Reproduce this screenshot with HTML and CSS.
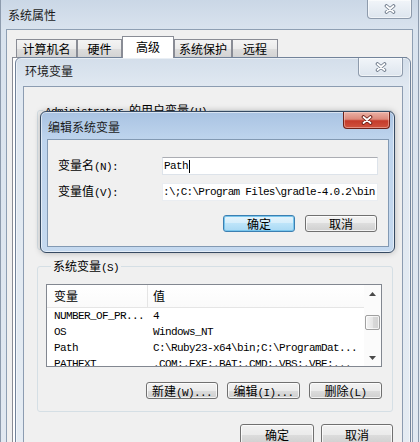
FILE: index.html
```html
<!DOCTYPE html>
<html lang="zh-CN">
<head>
<meta charset="utf-8">
<title>系统属性</title>
<link rel="stylesheet" href="styles.css">
</head>
<body>
<section class="win outer">
  <header class="tbar">
    <span class="ttl">系统属性</span>
    <span class="cls cls-in cls-outer">
      <svg width="12" height="10" viewBox="0 0 12 10"><path d="M2.5 2L9.5 8M9.5 2L2.5 8" stroke="#6f7b8b" stroke-width="3.6" stroke-linecap="round"/><path d="M2.5 2L9.5 8M9.5 2L2.5 8" stroke="#fff" stroke-width="1.8" stroke-linecap="round"/></svg>
    </span>
  </header>
  <div class="oclient">
    <div class="tabs">
      <span class="tab w61">计算机名</span>
      <span class="tab w45">硬件</span>
      <span class="tab sel w52">高级</span>
      <span class="tab w58">系统保护</span>
      <span class="tab w46">远程</span>
    </div>
    <div class="tabpanel"></div>
  </div>
</section>

<section class="win env">
  <header class="tbar env-tbar">
    <span class="ttl">环境变量</span>
    <span class="cls cls-in cls-env">
      <svg width="12" height="10" viewBox="0 0 12 10"><path d="M2.5 2L9.5 8M9.5 2L2.5 8" stroke="#6f7b8b" stroke-width="3.6" stroke-linecap="round"/><path d="M2.5 2L9.5 8M9.5 2L2.5 8" stroke="#fff" stroke-width="1.8" stroke-linecap="round"/></svg>
    </span>
  </header>
  <div class="eclient">
    <div class="group ugroup">
      <span class="glabel"><span class="m">Administrator </span>的用户变量<span class="m">(U)</span></span>
    </div>
    <div class="group sgroup">
      <span class="glabel">系统变量<span class="m">(S)</span></span>
      <div class="lv">
        <div class="lv-main">
          <div class="lv-head">
            <span class="h1">变量</span>
            <span class="h2">值</span>
          </div>
          <div class="lv-rows">
            <div class="row"><span class="c1 m">NUMBER_OF_PR...</span><span class="c2 m">4</span></div>
            <div class="row"><span class="c1 m">OS</span><span class="c2 m">Windows_NT</span></div>
            <div class="row"><span class="c1 m">Path</span><span class="c2 m">C:\Ruby23-x64\bin;C:\ProgramDat...</span></div>
            <div class="row"><span class="c1 m">PATHEXT</span><span class="c2 m">.COM;.EXE;.BAT;.CMD;.VBS;.VBE;...</span></div>
          </div>
        </div>
        <div class="sb">
          <span class="sb-btn"><svg width="7" height="4" viewBox="0 0 7 4"><path d="M0 4L3.5 0L7 4Z" fill="#4a4a4a"/></svg></span>
          <span class="sb-track"><span class="thumb"></span></span>
          <span class="sb-btn"><svg width="7" height="4" viewBox="0 0 7 4"><path d="M0 0L3.5 4L7 0Z" fill="#4a4a4a"/></svg></span>
        </div>
      </div>
      <div class="brow">
        <button class="btn w72">新建<span class="m">(W)...</span></button>
        <button class="btn w73">编辑<span class="m">(I)...</span></button>
        <button class="btn w73">删除<span class="m">(L)</span></button>
      </div>
    </div>
    <div class="brow bottom">
      <button class="btn w74 tall">确定</button>
      <button class="btn w72 tall">取消</button>
    </div>
  </div>
</section>

<section class="win edit">
  <header class="tbar edit-tbar">
    <span class="ttl">编辑系统变量</span>
    <span class="cls cls-red">
      <svg width="12" height="10" viewBox="0 0 12 10"><path d="M2.5 2L9.5 8M9.5 2L2.5 8" stroke="#6b1d14" stroke-width="3.6" stroke-linecap="round"/><path d="M2.5 2L9.5 8M9.5 2L2.5 8" stroke="#fff" stroke-width="1.8" stroke-linecap="round"/></svg>
    </span>
  </header>
  <div class="dclient">
    <div class="form">
      <span class="lbl">变量名<span class="m">(N):</span></span>
      <span class="inp m">Path<span class="caret"></span></span>
      <span class="lbl">变量值<span class="m">(V):</span></span>
      <span class="inp inp2 m">:\;C:\Program Files\gradle-4.0.2\bin</span>
    </div>
    <div class="drow">
      <button class="btn btn-def w72">确定</button>
      <button class="btn w72">取消</button>
    </div>
  </div>
</section>
</body>
</html>
```

FILE: styles.css
```css
* { box-sizing: border-box; margin: 0; padding: 0; }

html, body { width: 420px; height: 442px; overflow: hidden; }

body {
  position: relative;
  background: #e3eaf2;
  font: 12px/16px "Noto Sans CJK SC", "Liberation Sans", sans-serif;
  color: #000;
}

.m {
  font-family: "Liberation Mono", "Noto Sans CJK SC", monospace;
  font-size: 11px;
  letter-spacing: -0.6px;
}

/* ---------- windows ---------- */
.win {
  position: absolute;
  display: flex;
  flex-direction: column;
}

.tbar {
  display: flex;
  align-items: flex-start;
  flex: none;
}

.ttl { color: #1b1b1b; white-space: nowrap; }

.cls {
  margin-left: auto;
  display: flex;
  align-items: center;
  justify-content: center;
  border-top: 0;
  border-radius: 0 0 4px 4px;
}

.cls-in {
  width: 45px;
  height: 19px;
  border: 1px solid #8e9bac;
  border-top: 0;
  background: linear-gradient(#f1f5f9, #dde5ee);
  box-shadow: inset 0 0 0 1px rgba(255, 255, 255, 0.55);
}

/* outer window: 系统属性 */
.outer {
  left: 0;
  top: 0;
  width: 419px;
  height: 470px;
  padding: 0 5px;
  border-left: 1px solid #8d9bad;
  border-right: 1px solid #8d9bad;
  background: linear-gradient(#cad7e6, #d9e3ee 30px, #e2e9f1);
}

.outer .tbar { height: 29px; }
.outer .ttl { margin: 7px 0 0 2px; }
.cls-outer { margin-right: 1px; }

.oclient {
  flex: 1;
  display: flex;
  flex-direction: column;
  background: #f0f0f0;
  border: 1px solid #8e9fb3;
}

.tabs {
  display: flex;
  align-items: flex-end;
  height: 27px;
  padding-left: 9px;
}

.tab {
  height: 18px;
  line-height: 17px;
  text-align: center;
  border: 1px solid #898c95;
  border-bottom: 0;
  background: linear-gradient(#f4f4f4, #ebebeb 50%, #dedede 50%, #d3d3d3);
  white-space: nowrap;
}

.tab.sel {
  height: 22px;
  line-height: 20px;
  margin-bottom: -1px;
  background: #fff;
  position: relative;
  z-index: 1;
}

.w45 { width: 45px; }
.w46 { width: 46px; }
.w52 { width: 52px; }
.w58 { width: 58px; }
.w61 { width: 61px; }
.w72 { width: 72px; }
.w73 { width: 73px; }
.w74 { width: 74px; }

.tabpanel {
  flex: 1;
  margin: 0 5px 6px;
  background: #fff;
  border: 1px solid #898c95;
}

/* env window: 环境变量 */
.env {
  left: 15px;
  top: 57px;
  width: 396px;
  height: 420px;
  padding: 0 7px;
  border: 1px solid #72839a;
  border-radius: 6px 6px 0 0;
  background: linear-gradient(#d3deea, #e0e8f1 28px, #e5ecf3);
  box-shadow: inset 0 0 0 1px rgba(255, 255, 255, 0.5);
}

.env .tbar { height: 28px; }
.env .ttl { margin: 5px 0 0 2px; }

.eclient {
  flex: 1;
  display: flex;
  flex-direction: column;
  background: #f0f0f0;
  border: 1px solid #8c9cb1;
  padding: 0 9px 0 13px;
}

.group {
  border: 1px solid #d5dfe5;
  border-radius: 3px;
}

.glabel {
  display: block;
  width: max-content;
  margin: -8px 0 0 5px;
  padding: 0 2px;
  line-height: 14px;
  background: #f0f0f0;
  white-space: nowrap;
}

.ugroup {
  margin-top: 23px;
  height: 140px;
}

.sgroup {
  margin-top: 16px;
  padding: 0 10px 12px 8px;
}

/* list view */
.lv {
  margin-top: 9px;
  height: 83px;
  display: flex;
  background: #fff;
  border: 1px solid #828790;
}

.lv-main {
  flex: 1;
  min-width: 0;
  display: flex;
  flex-direction: column;
}

.lv-head {
  display: flex;
  height: 23px;
  flex: none;
  border-bottom: 1px solid #e5e5e5;
  background: linear-gradient(#fff, #fafafa);
}

.lv-head .h1 {
  width: 101px;
  padding-left: 7px;
  border-right: 1px solid #e5e5e5;
  line-height: 22px;
}

.lv-head .h2 {
  padding-left: 5px;
  line-height: 22px;
}

.lv-rows {
  flex: 1;
  overflow: hidden;
}

.row {
  display: flex;
  height: 16px;
  line-height: 16px;
  white-space: nowrap;
}

.row .c1 { width: 101px; padding-left: 7px; flex: none; }
.row .c2 { padding-left: 5px; }

.sb {
  width: 17px;
  flex: none;
  display: flex;
  flex-direction: column;
  background: #fbfbfb;
}

.sb-btn {
  height: 17px;
  flex: none;
  display: flex;
  align-items: center;
  justify-content: center;
}

.sb-track {
  flex: 1;
  padding-top: 13px;
  display: flex;
  justify-content: center;
}

.thumb {
  width: 15px;
  height: 15px;
  border: 1px solid #a0a0a0;
  border-radius: 2px;
  background: linear-gradient(90deg, #f4f4f4, #e6e6e6 50%, #d9d9d9 51%, #d2d2d2);
  box-shadow: inset 0 0 0 1px rgba(255, 255, 255, 0.7);
}

/* buttons */
.brow {
  display: flex;
  justify-content: flex-end;
  gap: 9px;
  margin-top: 15px;
}

.brow.bottom {
  margin-top: 12px;
  gap: 7px;
}

.btn {
  height: 17px;
  font: inherit;
  line-height: 15px;
  color: #000;
  text-align: center;
  border: 1px solid #707070;
  border-radius: 3px;
  background: linear-gradient(#f2f2f2, #ebebeb 50%, #dddddd 50%, #cfcfcf);
  box-shadow: inset 0 0 0 1px rgba(255, 255, 255, 0.75);
  white-space: nowrap;
}

.btn.tall {
  height: 21px;
  line-height: 19px;
}

.btn-def {
  border-color: #3c7fb1;
  background: linear-gradient(#e5f4fc, #d4edfb 50%, #bde4f9 50%, #a9d9f4);
  box-shadow: inset 0 0 0 1px #79c6ed;
}

/* edit window: 编辑系统变量 */
.edit {
  left: 40px;
  top: 111px;
  width: 355px;
  height: 142px;
  padding: 0 5px 5px 6px;
  border: 1px solid #364a62;
  border-radius: 6px;
  background: linear-gradient(#a9c3e2, #bed4ed 27px, #c5d9ef);
  box-shadow: inset 0 0 0 1px rgba(255, 255, 255, 0.55), 0 0 6px rgba(0, 0, 0, 0.25);
}

.edit .tbar { height: 27px; }
.edit .ttl { margin: 7px 0 0 1px; }

.cls-red {
  width: 47px;
  height: 17px;
  margin-right: -1px;
  border: 1px solid #6e2219;
  border-top: 0;
  background: linear-gradient(#eab1a6, #dc8a7b 45%, #c53b2b 55%, #d0533f);
  box-shadow: inset 0 0 0 1px rgba(255, 220, 210, 0.45);
}

.dclient {
  flex: 1;
  background: #f0f0f0;
  border: 1px solid #8299b3;
  padding: 17px 10px 0 10px;
}

.form {
  display: grid;
  grid-template-columns: 104px 216px;
  row-gap: 8px;
  align-items: center;
}

.lbl { white-space: nowrap; }

.inp {
  height: 18px;
  line-height: 16px;
  padding-left: 1px;
  background: #fff;
  border: 1px solid #dde3ea;
  border-top-color: #abadb3;
  white-space: nowrap;
  overflow: hidden;
  display: flex;
  align-items: center;
}

.inp2 {
  padding-left: 0;
  letter-spacing: -0.72px;
  border-color: #eaedf1;
}

.caret {
  width: 1px;
  height: 13px;
  margin-left: 1px;
  background: #000;
}

.drow {
  display: flex;
  justify-content: flex-end;
  gap: 10px;
  margin: 14px 1px 0 0;
}
```
